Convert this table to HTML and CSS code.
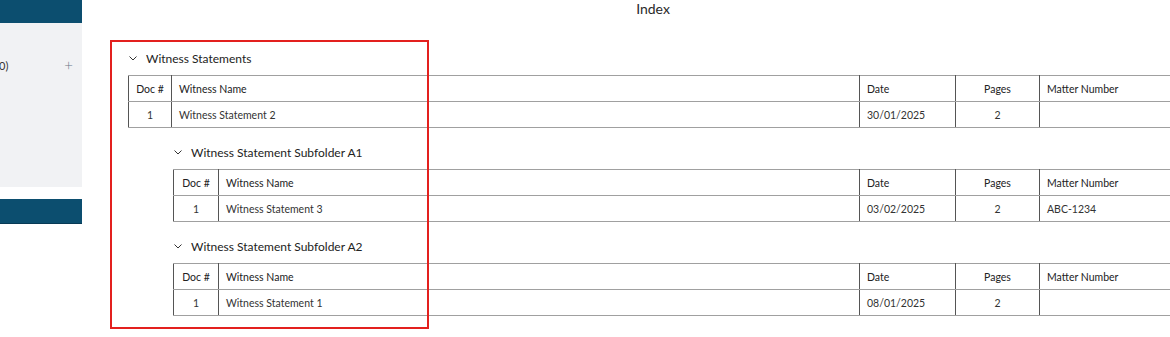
FILE: index.html
```html
<!DOCTYPE html>
<html lang="en">
<head>
<meta charset="utf-8">
<title>Index</title>
<link rel="stylesheet" href="styles.css">
</head>
<body>
<div class="page">
  <aside class="sidebar">
    <div class="sidebar-top"></div>
    <div class="sidebar-panel">
      <div class="sidebar-row">
        <span class="sidebar-label">0)</span>
        <span class="sidebar-plus">+</span>
      </div>
    </div>
    <div class="sidebar-button"></div>
  </aside>
  <main class="main">
    <h1 class="title">Index</h1>

    <section class="folder">
      <div class="folder-head">
        <svg class="chev" width="8" height="5" viewBox="0 0 8 5"><path d="M0.5 0.5 L4 4 L7.5 0.5" fill="none" stroke="#333" stroke-width="1"/></svg>
        <span>Witness Statements</span>
      </div>
      <table class="doc-table">
        <colgroup><col class="c-doc"><col class="c-name"><col class="c-date"><col class="c-pages"><col class="c-matter"></colgroup>
        <tr><th class="center">Doc #</th><th>Witness Name</th><th>Date</th><th class="center">Pages</th><th>Matter Number</th></tr>
        <tr><td class="center">1</td><td>Witness Statement 2</td><td>30/01/2025</td><td class="center">2</td><td></td></tr>
      </table>

      <section class="folder sub">
        <div class="folder-head">
          <svg class="chev" width="8" height="5" viewBox="0 0 8 5"><path d="M0.5 0.5 L4 4 L7.5 0.5" fill="none" stroke="#333" stroke-width="1"/></svg>
          <span>Witness Statement Subfolder A1</span>
        </div>
        <table class="doc-table">
          <colgroup><col class="c-doc2"><col class="c-name2"><col class="c-date"><col class="c-pages"><col class="c-matter"></colgroup>
          <tr><th class="center">Doc #</th><th>Witness Name</th><th>Date</th><th class="center">Pages</th><th>Matter Number</th></tr>
          <tr><td class="center">1</td><td>Witness Statement 3</td><td>03/02/2025</td><td class="center">2</td><td>ABC-1234</td></tr>
        </table>
      </section>

      <section class="folder sub">
        <div class="folder-head">
          <svg class="chev" width="8" height="5" viewBox="0 0 8 5"><path d="M0.5 0.5 L4 4 L7.5 0.5" fill="none" stroke="#333" stroke-width="1"/></svg>
          <span>Witness Statement Subfolder A2</span>
        </div>
        <table class="doc-table">
          <colgroup><col class="c-doc2"><col class="c-name2"><col class="c-date"><col class="c-pages"><col class="c-matter"></colgroup>
          <tr><th class="center">Doc #</th><th>Witness Name</th><th>Date</th><th class="center">Pages</th><th>Matter Number</th></tr>
          <tr><td class="center">1</td><td>Witness Statement 1</td><td>08/01/2025</td><td class="center">2</td><td></td></tr>
        </table>
      </section>
    </section>

    <div class="highlight"></div>
  </main>
</div>
</body>
</html>
```

FILE: styles.css
```css
html, body {
  margin: 0;
  padding: 0;
  background: #ffffff;
}

body {
  font-family: Lato, "Open Sans", "Liberation Sans", sans-serif;
  color: #333;
  overflow: hidden;
}

.page {
  display: flex;
  width: 1170px;
  height: 337px;
  overflow: hidden;
}

.sidebar {
  flex: none;
  width: 82px;
  display: flex;
  flex-direction: column;
}

.sidebar-top {
  height: 23px;
  background: #0c4e6f;
}

.sidebar-panel {
  height: 164px;
  background: #f1f2f4;
  padding-top: 34px;
  box-sizing: border-box;
}

.sidebar-row {
  display: flex;
  justify-content: space-between;
  align-items: center;
  height: 16px;
  padding-right: 9px;
  font-size: 11px;
  color: #333;
}

.sidebar-label {
  margin-left: -1px;
}

.sidebar-plus {
  font-size: 15px;
  font-weight: 300;
  color: #6b7785;
}

.sidebar-button {
  margin-top: 12px;
  height: 25px;
  background: #0c4e6f;
  border-bottom: 1px solid #083a55;
  box-sizing: border-box;
}

.main {
  flex: none;
  width: 1142px;
  position: relative;
}

.title {
  margin: 0;
  height: 17px;
  line-height: 17px;
  font-size: 14px;
  font-weight: 400;
  text-align: center;
  color: #2a2a2a;
}

.folder {
  margin-left: 46px;
  margin-top: 31px;
}

.folder.sub {
  margin-left: 45px;
  margin-top: 14px;
}

.folder-head {
  display: flex;
  align-items: center;
  height: 20px;
  font-size: 12px;
  color: #222;
  margin-bottom: 7px;
}

.chev {
  margin-left: 1px;
  margin-right: 9px;
}

.doc-table {
  border-collapse: collapse;
  table-layout: fixed;
  font-size: 10.5px;
  color: #333;
}

.folder > .doc-table { width: 1072px; }
.folder.sub > .doc-table { width: 1027px; }

.c-doc { width: 43px; }
.c-name { width: 688px; }
.c-doc2 { width: 45px; }
.c-name2 { width: 641px; }
.c-date { width: 96px; }
.c-pages { width: 84px; }

.doc-table tr {
  height: 26px;
}

.doc-table th,
.doc-table td {
  height: 26px;
  padding: 0 7px;
  text-align: left;
  font-weight: 400;
  border-top: 1px solid #a0a0a0;
  border-bottom: 1px solid #a0a0a0;
  border-left: 1px solid #555;
  border-right: 1px solid #555;
  white-space: nowrap;
  box-sizing: border-box;
}

.doc-table th {
  color: #222;
}

.doc-table .center {
  text-align: center;
}

.highlight {
  position: absolute;
  left: 28px;
  top: 40px;
  width: 319px;
  height: 289px;
  border: 2px solid #e3201e;
  box-sizing: border-box;
  pointer-events: none;
}
```
